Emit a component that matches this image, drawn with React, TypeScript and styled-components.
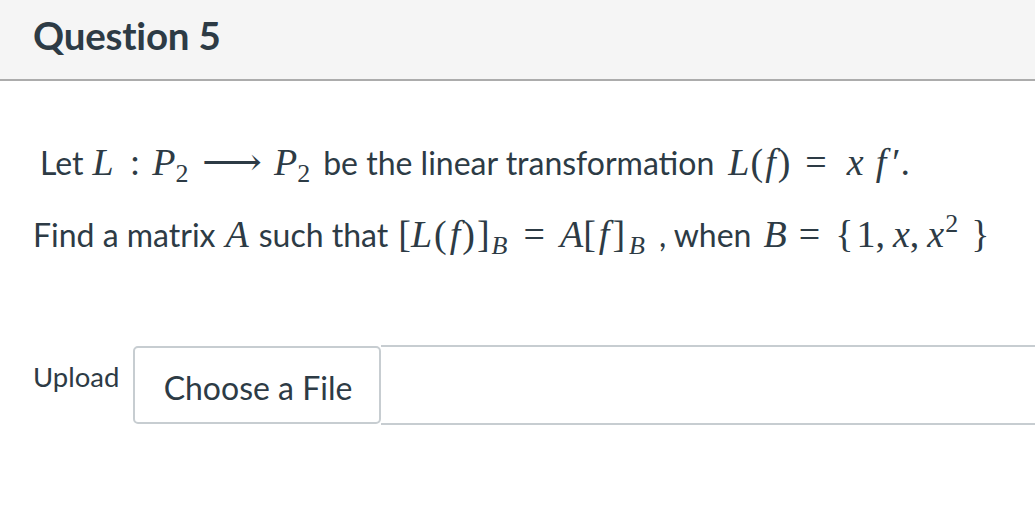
import * as React from 'react';
import styled, { createGlobalStyle } from 'styled-components';

const GlobalStyle = createGlobalStyle`
  html, body {
    margin: 0;
    padding: 0;
    background: #fff;
  }
  body {
    font-family: Lato, "Liberation Sans", sans-serif;
    color: #2d3b45;
    overflow: hidden;
  }
`;

const Header = styled.div`
  height: 79px;
  display: flex;
  align-items: center;
  padding: 0 33px;
  background: #f5f5f5;
  border-bottom: 2px solid #acacac;
`;

const Title = styled.h2`
  margin: 0 0 10px;
  font-size: 38.5px;
  font-weight: 700;
  letter-spacing: -0.2px;
`;

const Body = styled.div`
  padding: 0 33px;
`;

const Line = styled.p<{ $indent?: number; $top: number }>`
  margin: ${p => p.$top}px 0 0;
  padding-left: ${p => p.$indent ?? 0}px;
  font-size: 32px;
  line-height: 40px;
  white-space: nowrap;
`;

type Gap = { $l?: number; $r?: number };

const Mi = styled.span<Gap>`
  font-family: "Liberation Serif", "DejaVu Serif", serif;
  font-style: italic;
  font-size: 38px;
  margin-left: ${p => p.$l ?? 0}px;
  margin-right: ${p => p.$r ?? 0}px;
`;

const Mo = styled.span<Gap>`
  font-family: "Liberation Serif", "DejaVu Serif", serif;
  font-size: 38px;
  margin-left: ${p => p.$l ?? 0}px;
  margin-right: ${p => p.$r ?? 0}px;
`;

const Arrow = styled.span<Gap>`
  display: inline-block;
  font-family: "Liberation Serif", "DejaVu Serif", serif;
  font-size: 38px;
  transform: scaleX(1.1);
  transform-origin: left center;
  margin-left: ${p => p.$l ?? 0}px;
  margin-right: ${p => p.$r ?? 0}px;
`;

const Sub = styled.sub<Gap & { $italic?: boolean }>`
  font-family: "Liberation Serif", "DejaVu Serif", serif;
  font-style: ${p => (p.$italic ? 'italic' : 'normal')};
  font-size: 26px;
  vertical-align: -7px;
  line-height: 0;
  margin-left: ${p => p.$l ?? 0}px;
  margin-right: ${p => p.$r ?? 0}px;
`;

const Sup = styled.sup<Gap>`
  font-family: "Liberation Serif", "DejaVu Serif", serif;
  font-size: 26px;
  vertical-align: 15px;
  line-height: 0;
  margin-left: ${p => p.$l ?? 0}px;
  margin-right: ${p => p.$r ?? 0}px;
`;

const Text = styled.span<Gap>`
  margin-left: ${p => p.$l ?? 0}px;
  margin-right: ${p => p.$r ?? 0}px;
`;

const UploadRow = styled.div`
  display: flex;
  align-items: flex-start;
  margin-top: 90px;
`;

const UploadLabel = styled.label`
  font-size: 27.5px;
  line-height: 30px;
  padding-top: 17px;
  width: 100px;
  flex-shrink: 0;
`;

const FileField = styled.div`
  display: flex;
  flex: 1;
  margin-right: -33px;
`;

const ChooseButton = styled.button`
  box-sizing: border-box;
  width: 248px;
  height: 78px;
  margin-top: 1px;
  border: 2px solid #c7cdd1;
  border-radius: 5px;
  background: #fff;
  color: #2d3b45;
  font-family: Lato, "Liberation Sans", sans-serif;
  font-size: 32px;
  padding: 4px 0 0 2px;
  flex-shrink: 0;
`;

const FileName = styled.div`
  flex: 1;
  height: 76px;
  border-top: 2px solid #c7cdd1;
  border-bottom: 2px solid #c7cdd1;
`;

export default function App() {
  return (
    <>
      <GlobalStyle />
      <Header>
        <Title>Question 5</Title>
      </Header>
      <Body>
        <Line $indent={7} $top={61}>
          Let
          <Mi $l={9}>L</Mi>
          <Mo $l={16} $r={12}>:</Mo>
          <Mi>P</Mi>
          <Sub>2</Sub>
          <Arrow $l={14} $r={17}>⟶</Arrow>
          <Mi>P</Mi>
          <Sub $r={13}>2</Sub>
          <Text>be the linear transformation</Text>
          <Mi $l={14}>L</Mi>
          <Mo $l={1}>(</Mo>
          <Mi $l={2}>f</Mi>
          <Mo $l={2}>)</Mo>
          <Mo $l={15}>=</Mo>
          <Mi $l={20}>x</Mi>
          <Mi $l={12}>f</Mi>
          <Mo $l={6}>′.</Mo>
        </Line>
        <Line $top={31}>
          Find a matrix
          <Mi $l={10} $r={10}>A</Mi>
          <Text>such that</Text>
          <Mo $l={10}>[</Mo>
          <Mi>L</Mi>
          <Mo $l={2}>(</Mo>
          <Mi $l={3}>f</Mi>
          <Mo $l={2}>)</Mo>
          <Mo $l={2}>]</Mo>
          <Sub $italic $l={2}>B</Sub>
          <Mo $l={16}>=</Mo>
          <Mi $l={15}>A</Mi>
          <Mo>[</Mo>
          <Mi $l={3}>f</Mi>
          <Mo $l={3}>]</Mo>
          <Sub $italic $l={4}>B</Sub>
          <Text $l={14}>, when</Text>
          <Mi $l={12}>B</Mi>
          <Mo $l={12}>=</Mo>
          <Mo $l={15}>{'{'}</Mo>
          <Mo $l={3}>1</Mo>
          <Mo>,</Mo>
          <Mi $l={8}>x</Mi>
          <Mo>,</Mo>
          <Mi $l={8}>x</Mi>
          <Sup $l={1}>2</Sup>
          <Mo $l={13}>{'}'}</Mo>
        </Line>
        <UploadRow>
          <UploadLabel>Upload</UploadLabel>
          <FileField>
            <ChooseButton type="button">Choose a File</ChooseButton>
            <FileName />
          </FileField>
        </UploadRow>
      </Body>
    </>
  );
}
